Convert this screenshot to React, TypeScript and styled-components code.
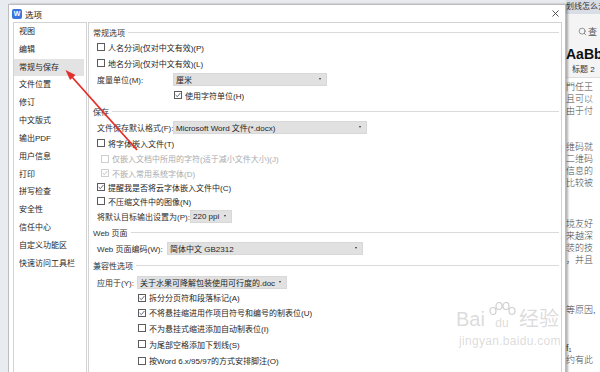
import React from "react";
import styled, { createGlobalStyle } from "styled-components";
import { Search } from "lucide-react";

const GlobalStyle = createGlobalStyle`
  html, body { margin: 0; padding: 0; }
  body {
    font-family: "Liberation Sans", "Noto Sans CJK SC", sans-serif;
  }
`;

const Screen = styled.div`
  position: relative;
  width: 600px;
  height: 372px;
  overflow: hidden;
  display: flex;
  background: #e8ebef;
  font-size: 8px;
  color: #2a2a2a;
`;

const Dialog = styled.div`
  position: relative;
  z-index: 1;
  flex-shrink: 0;
  margin: 4px 0 0 8px;
  width: 558px;
  height: 380px;
  box-sizing: border-box;
  border: 1px solid #bcbcbc;
  background: #fff;
  box-shadow: 2px 0 2px rgba(0, 0, 0, 0.3);
  display: flex;
  flex-direction: column;
`;

const TitleBar = styled.div`
  height: 17px;
  flex-shrink: 0;
  display: flex;
  align-items: center;
  gap: 3px;
  padding: 0 6px 0 3px;
  font-size: 8.5px;
  color: #222;
`;

const AppIcon = styled.span`
  width: 10px;
  height: 10px;
  border-radius: 2px;
  background: #3a74e0;
  color: #fff;
  font-size: 7px;
  font-weight: bold;
  display: flex;
  align-items: center;
  justify-content: center;
`;

const Title = styled.span`
  flex: 1;
`;

const Body = styled.div`
  flex: 1;
  display: flex;
  gap: 1px;
  padding: 0 3px 0 4px;
`;

const Nav = styled.ul`
  list-style: none;
  margin: 0;
  padding: 0;
  width: 74px;
  flex-shrink: 0;
  box-sizing: border-box;
  border: 1px solid #d3d3d3;
`;

const NavItem = styled.li<{ $active?: boolean }>`
  height: 17.83px;
  line-height: 17.83px;
  padding-left: 5px;
  margin-right: 2px;
  white-space: nowrap;
  color: #262626;
  background: ${(p) => (p.$active ? "#e3e3e3" : "transparent")};
`;

const Content = styled.div`
  flex: 1;
  box-sizing: border-box;
  border: 1px solid #d3d3d3;
  padding: 2px 2px 0 4px;
`;

const SectionHeader = styled.div<{ $h: number }>`
  height: ${(p) => p.$h}px;
  display: flex;
  align-items: center;
  gap: 3px;
  color: #333;
  &::after {
    content: "";
    flex: 1;
    height: 1px;
    background: #dadada;
  }
`;

const Row = styled.div<{ $h?: number; $indent?: number; $disabled?: boolean }>`
  height: ${(p) => p.$h ?? 16}px;
  display: flex;
  align-items: center;
  padding-left: ${(p) => 4 + (p.$indent ?? 0)}px;
  white-space: nowrap;
  color: ${(p) => (p.$disabled ? "#ababab" : "#262626")};
`;

const Box = styled.span<{ $disabled?: boolean }>`
  width: 8px;
  height: 8px;
  box-sizing: border-box;
  flex-shrink: 0;
  margin-right: 3px;
  border: 1px solid ${(p) => (p.$disabled ? "#cfcfcf" : "#5c5c5c")};
  background: #fff;
  display: flex;
  align-items: center;
  justify-content: center;
`;

const Label = styled.span<{ $w: number }>`
  width: ${(p) => p.$w}px;
  flex-shrink: 0;
  color: #2f2f2f;
`;

const Select = styled.div<{ $w: number }>`
  position: relative;
  width: ${(p) => p.$w}px;
  height: 13px;
  box-sizing: border-box;
  padding-left: 2px;
  background: #e1e1e1;
  border: 1px solid #d8d8d8;
  display: flex;
  align-items: center;
  color: #1e1e1e;
  overflow: hidden;
  &::after {
    content: "";
    position: absolute;
    right: 5px;
    top: 4.5px;
    border-left: 1.5px solid transparent;
    border-right: 1.5px solid transparent;
    border-top: 2px solid #333;
  }
`;

const DocPane = styled.div`
  flex: 1;
  display: flex;
  flex-direction: column;
  background: #fff;
  overflow: hidden;
`;

const DocTopBar = styled.div`
  height: 14px;
  flex-shrink: 0;
  background: #d9dee6;
  line-height: 14px;
  white-space: nowrap;
  color: #333;
`;

const Ribbon = styled.div`
  height: 64px;
  flex-shrink: 0;
  box-sizing: border-box;
  background: #f4f4f5;
  border-bottom: 1px solid #dedede;
  display: flex;
  flex-direction: column;
  white-space: nowrap;
`;

const SearchBox = styled.div`
  margin: 11px 0 0 12px;
  display: flex;
  align-items: center;
  gap: 1px;
  color: #555;
  font-size: 9px;
`;

const StyleSample = styled.div`
  margin-top: 8px;
  font-size: 14px;
  font-weight: bold;
  color: #111;
  line-height: 16px;
`;

const StyleName = styled.div`
  margin: 1px 0 0 6px;
  color: #333;
`;

const DocText = styled.div<{ $mt: number }>`
  margin-top: ${(p) => p.$mt}px;
  font-size: 9px;
  line-height: 12px;
  color: #4a4a4a;
  white-space: nowrap;
  font-weight: 300;
`;

const Overlay = styled.svg`
  position: absolute;
  inset: 0;
  z-index: 3;
  pointer-events: none;
`;

const Watermark = styled.div`
  position: absolute;
  left: 456px;
  top: 302px;
  z-index: 2;
  pointer-events: none;
  color: rgba(175, 175, 175, 0.45);
  font-family: "Liberation Sans", "Noto Sans CJK SC", sans-serif;
`;

const MarkLine = styled.div`
  display: flex;
  align-items: flex-end;
  gap: 2px;
  font-size: 20px;
  line-height: 22px;
`;

const Paw = styled.span`
  position: relative;
  display: flex;
  flex-direction: column;
  align-items: center;
  font-size: 12px;
  line-height: 14px;
`;

const MarkUrl = styled.div`
  margin: 4px 0 0 3px;
  font-size: 12px;
  letter-spacing: 0.3px;
`;

type Cb = { checked?: boolean; disabled?: boolean };

const Check = ({ checked, disabled }: Cb) => (
  <Box $disabled={disabled}>
    {checked && (
      <svg width="6" height="6" viewBox="0 0 6 6">
        <polyline points="0.6,3 2.3,4.7 5.4,1" fill="none" stroke={disabled ? "#bbb" : "#4d5a6b"} strokeWidth="0.9" />
      </svg>
    )}
  </Box>
);

const navItems = [
  "视图", "编辑", "常规与保存", "文件位置", "修订", "中文版式", "输出PDF",
  "用户信息", "打印", "拼写检查", "安全性", "信任中心", "自定义功能区", "快速访问工具栏",
];

const App = () => {
  return (
    <Screen>
      <GlobalStyle />
      <Dialog>
        <TitleBar>
          <AppIcon>W</AppIcon>
          <Title>选项</Title>
          <svg width="7" height="7" viewBox="0 0 7 7">
            <path d="M0.5 0.5 L6.5 6.5 M6.5 0.5 L0.5 6.5" stroke="#444" strokeWidth="0.9" />
          </svg>
        </TitleBar>
        <Body>
          <Nav>
            {navItems.map((n) => (
              <NavItem key={n} $active={n === "常规与保存"}>{n}</NavItem>
            ))}
          </Nav>
          <Content>
            <SectionHeader $h={14}>常规选项</SectionHeader>
            <Row><Check />人名分词(仅对中文有效)(P)</Row>
            <Row><Check />地名分词(仅对中文有效)(L)</Row>
            <Row>
              <Label $w={76}>度量单位(M):</Label>
              <Select $w={154}>厘米</Select>
            </Row>
            <Row $indent={77}><Check checked />使用字符单位(H)</Row>

            <SectionHeader $h={16}>保存</SectionHeader>
            <Row>
              <Label $w={76}>文件保存默认格式(F):</Label>
              <Select $w={194}>Microsoft Word 文件(*.docx)</Select>
            </Row>
            <Row><Check />将字体嵌入文件(T)</Row>
            <Row $h={15} $indent={4} $disabled><Check disabled />仅嵌入文档中所用的字符(适于减小文件大小)(J)</Row>
            <Row $h={14} $indent={4} $disabled><Check disabled checked />不嵌入常用系统字体(D)</Row>
            <Row $h={14}><Check checked />提醒我是否将云字体嵌入文件中(C)</Row>
            <Row $h={14}><Check />不压缩文件中的图像(N)</Row>
            <Row>
              <Label $w={93}>将默认目标输出设置为(P):</Label>
              <Select $w={42}>220 ppi</Select>
            </Row>

            <SectionHeader $h={16}>Web 页面</SectionHeader>
            <Row>
              <Label $w={70}>Web 页面编码(W):</Label>
              <Select $w={196}>简体中文 GB2312</Select>
            </Row>

            <SectionHeader $h={18}>兼容性选项</SectionHeader>
            <Row>
              <Label $w={40}>应用于(Y):</Label>
              <Select $w={150}>关于水果可降解包装使用可行度的.doc</Select>
            </Row>
            <Row $h={15} $indent={41}><Check checked />拆分分页符和段落标记(A)</Row>
            <Row $h={15} $indent={41}><Check checked />不将悬挂缩进用作项目符号和编号的制表位(U)</Row>
            <Row $indent={41}><Check />不为悬挂式缩进添加自动制表位(I)</Row>
            <Row $indent={41}><Check />为尾部空格添加下划线(S)</Row>
            <Row $h={17} $indent={41}><Check />按Word 6.x/95/97的方式安排脚注(O)</Row>
          </Content>
        </Body>
      </Dialog>

      <DocPane>
        <DocTopBar>划线怎么去</DocTopBar>
        <Ribbon>
          <SearchBox>
            <Search size={9} strokeWidth={1.6} />查
          </SearchBox>
          <StyleSample>AaBb</StyleSample>
          <StyleName>标题 2</StyleName>
        </Ribbon>
        <DocText $mt={3}>門任王<br />且可以<br />由于付</DocText>
        <DocText $mt={24}>维码就<br />二维码<br />信息的<br />比较被</DocText>
        <DocText $mt={29}>境友好<br />来越深<br />装的技<br />，并且</DocText>
        <DocText $mt={38}>等原因,</DocText>
        <DocText $mt={26}>f₁</DocText>
        <DocText $mt={0}>约有此</DocText>
      </DocPane>

      <Watermark>
        <MarkLine>
          <span>Bai</span>
          <Paw>
            <svg width="30" height="14" viewBox="0 0 30 14">
              <g fill="none" stroke="rgba(175,175,175,0.6)" strokeWidth="1.2">
                <ellipse cx="6" cy="9" rx="3" ry="3.5" />
                <ellipse cx="12" cy="4" rx="3" ry="3.5" />
                <ellipse cx="19" cy="4" rx="3" ry="3.5" />
                <ellipse cx="25" cy="9" rx="3" ry="3.5" />
              </g>
            </svg>
            <span>du</span>
          </Paw>
          <span>经验</span>
        </MarkLine>
        <MarkUrl>jingyan.baidu.com</MarkUrl>
      </Watermark>

      <Overlay width="600" height="372" viewBox="0 0 600 372">
        <line x1="137" y1="150" x2="72" y2="77" stroke="#e2302c" strokeWidth="1.8" />
        <polygon points="65.5,70 75.5,75 70,80" fill="#e2302c" />
      </Overlay>
    </Screen>
  );
};

export default App;
